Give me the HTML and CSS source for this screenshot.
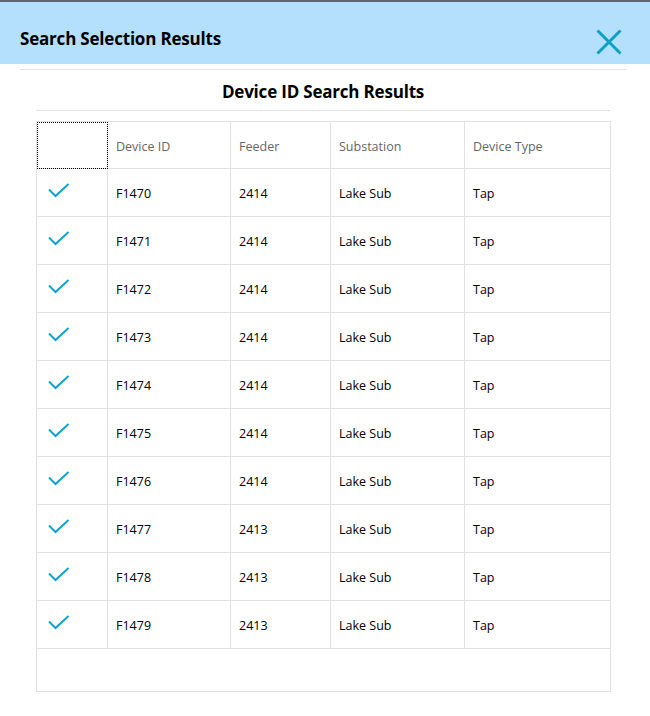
FILE: index.html
```html
<!DOCTYPE html>
<html>
<head>
<meta charset="utf-8">
<link rel="stylesheet" href="styles.css">
</head>
<body>
<div class="topbar"></div>
<header class="dialog-header">
  <h1 class="dialog-title">Search Selection Results</h1>
  <button class="close-btn" aria-label="Close">
    <svg width="26" height="26" viewBox="0 0 26 26"><path d="M1.5 1.5 L24.5 24.5 M24.5 1.5 L1.5 24.5" stroke="#0aa1c9" stroke-width="3" fill="none"/></svg>
  </button>
</header>
<main class="content">
  <div class="divider"></div>
  <section class="results">
    <h2 class="results-title">Device ID Search Results</h2>
    <table class="grid">
      <colgroup>
        <col class="c-check"><col class="c-id"><col class="c-feeder"><col class="c-sub"><col class="c-type">
      </colgroup>
      <thead>
        <tr><th class="focus"></th><th>Device ID</th><th>Feeder</th><th>Substation</th><th>Device Type</th></tr>
      </thead>
      <tbody id="rows"></tbody>
      <tfoot><tr class="empty"><td colspan="5"></td></tr></tfoot>
    </table>
  </section>
</main>
<script src="app.js"></script>
</body>
</html>
```
FILE: app.js
```js
const data = [
  ["F1470","2414"],["F1471","2414"],["F1472","2414"],["F1473","2414"],["F1474","2414"],
  ["F1475","2414"],["F1476","2414"],["F1477","2413"],["F1478","2413"],["F1479","2413"]
];
const check = '<svg class="check" width="22" height="15" viewBox="0 0 22 15"><path d="M1 6.5 L7.5 13 L20.5 1" stroke="#12a3cc" stroke-width="2" fill="none"/></svg>';
document.getElementById("rows").innerHTML = data.map(r =>
  `<tr><td class="check-cell">${check}</td><td>${r[0]}</td><td>${r[1]}</td><td>Lake Sub</td><td>Tap</td></tr>`
).join("");
```
FILE: styles.css
```css
* { box-sizing: border-box; }
body {
  margin: 0;
  background: #ffffff;
  font-family: "Open Sans", "Noto Sans", sans-serif;
  color: #000;
}
.topbar {
  height: 2px;
  background: #5d6670;
}
.dialog-header {
  height: 62px;
  background: #b4e0fd;
  display: flex;
  align-items: center;
  justify-content: space-between;
  padding: 0 28px 0 20px;
}
.dialog-title {
  margin: 0;
  font-size: 17px;
  font-weight: 700;
  letter-spacing: -0.2px;
  padding-top: 10px;
}
.close-btn {
  border: 0;
  background: none;
  padding: 0;
  margin-top: 18px;
  width: 26px;
  height: 26px;
  display: block;
}
.close-btn svg { display: block; }
.content {
  padding: 0 23px 0 20px;
}
.divider {
  margin-top: 5px;
  height: 1px;
  background: #e3e3e3;
}
.results {
  margin: 0 17px 0 16px;
  width: 574px;
}
.results-title {
  margin: 0;
  height: 41px;
  border-bottom: 1px solid #e3e3e3;
  text-align: center;
  font-size: 17px;
  font-weight: 700;
  letter-spacing: -0.2px;
  padding-top: 10px;
  line-height: 24px;
}
.grid {
  margin-top: 10px;
  width: 574px;
  border-collapse: collapse;
  table-layout: fixed;
  font-size: 12.5px;
}
.c-check { width: 71px; }
.c-id { width: 123px; }
.c-feeder { width: 100px; }
.c-sub { width: 134px; }
.c-type { width: 146px; }
.grid th, .grid td {
  border: 1px solid #e1e1e1;
  text-align: left;
  padding: 2px 0 0 8px;
  vertical-align: middle;
}
.grid th {
  height: 47px;
  font-weight: 400;
  color: #666666;
}
.grid th.focus {
  outline: 1px dotted #000;
  outline-offset: -1px;
}
.grid tbody td { height: 48px; }
.grid td.check-cell {
  padding: 0 0 4px 11px;
}
.check { display: block; }
.grid tr.empty td { height: 43px; }
```
